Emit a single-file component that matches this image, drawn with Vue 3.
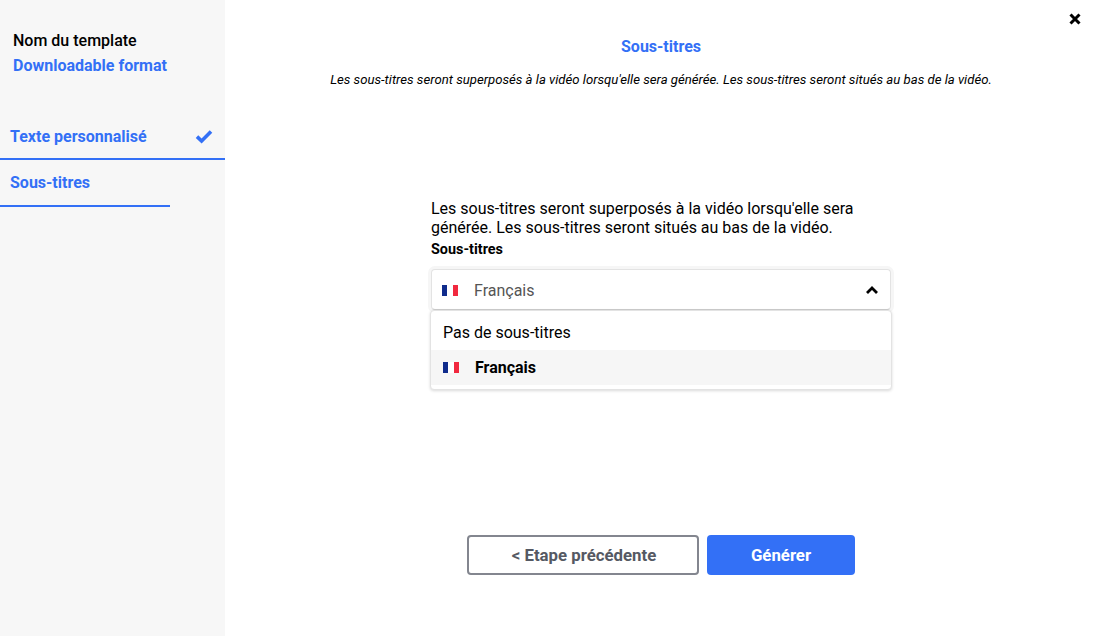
<template>
    <div class="page">
        <aside class="sidebar">
            <div class="template">
                <div class="template-name">Nom du template</div>
                <div class="template-format">Downloadable format</div>
            </div>
            <div class="step step-done">
                <span>Texte personnalisé</span>
                <svg class="check" width="18" height="14" viewBox="0 0 18 14">
                    <path d="M2 6.6l4.6 4.4L16 1.6" fill="none" stroke="#3370f6" stroke-width="3.6"/>
                </svg>
            </div>
            <div class="step step-current">
                <span>Sous-titres</span>
            </div>
        </aside>

        <main class="content">
            <button class="close" type="button" aria-label="Fermer">
                <svg width="12" height="12" viewBox="0 0 12 12">
                    <path d="M1.5 1.5l9 9M10.5 1.5l-9 9" stroke="#000" stroke-width="3"/>
                </svg>
            </button>

            <h1 class="title">Sous-titres</h1>
            <p class="subtitle">{{ description }}</p>

            <div class="form">
                <p class="intro">{{ description }}</p>
                <div class="label">Sous-titres</div>
                <div class="select">
                    <div class="select-box">
                        <span class="flag"><i></i><i></i><i></i></span>
                        <span class="select-value">{{ selected }}</span>
                        <svg class="chevron" width="14" height="10" viewBox="0 0 14 10">
                            <path d="M2 8l5-5 5 5" fill="none" stroke="#000" stroke-width="2.8"/>
                        </svg>
                    </div>
                    <ul class="menu">
                        <li v-for="option in options" :key="option.label" class="option" :class="{ active: option.label === selected }">
                            <span v-if="option.flag" class="flag"><i></i><i></i><i></i></span>
                            {{ option.label }}
                        </li>
                    </ul>
                </div>
            </div>

            <div class="actions">
                <button class="btn btn-back" type="button">&lt; Etape précédente</button>
                <button class="btn btn-primary" type="button">Générer</button>
            </div>
        </main>
    </div>
</template>

<script setup>
    const description = "Les sous-titres seront superposés à la vidéo lorsqu'elle sera générée. Les sous-titres seront situés au bas de la vidéo.";
    const selected = 'Français';
    const options = [
        { label: 'Pas de sous-titres', flag: false },
        { label: 'Français', flag: true }
    ];
</script>

<style>
    html, body{
        margin: 0;
        background: #fff;
    }
</style>

<style scoped>
    .page{
        display: flex;
        height: 636px;
        overflow: hidden;
        font-family: Roboto, "Liberation Sans", sans-serif;
        color: #000;
    }
    .sidebar{
        width: 225px;
        flex-shrink: 0;
        background: #f7f7f7;
    }
    .template{
        padding: 31px 13px 0;
        font-size: 16px;
        font-weight: 500;
        line-height: 20px;
    }
    .template-format{
        margin-top: 5px;
        color: #3370f6;
        font-weight: 700;
    }
    .step{
        display: flex;
        justify-content: space-between;
        align-items: center;
        box-sizing: border-box;
        height: 47px;
        padding: 0 12px 0 10px;
        color: #3370f6;
        font-size: 16px;
        font-weight: 700;
        border-bottom: 2px solid #3370f6;
    }
    .step-done{
        margin-top: 37px;
        padding-top: 2px;
    }
    .step-current{
        width: 170px;
    }
    .content{
        position: relative;
        flex: 1;
        display: flex;
        flex-direction: column;
        align-items: center;
        padding-left: 3px;
    }
    .close{
        position: absolute;
        top: 13px;
        right: 13px;
        width: 12px;
        height: 12px;
        padding: 0;
        border: none;
        background: none;
        display: flex;
    }
    .title{
        margin: 38px 0 0;
        color: #3370f6;
        font-size: 16px;
        font-weight: 700;
        line-height: 18px;
    }
    .subtitle{
        margin: 15px 0 0;
        font-size: 13.16px;
        font-style: italic;
        line-height: 18px;
    }
    .form{
        width: 460px;
        margin-top: 110px;
    }
    .intro{
        margin: 0;
        font-size: 16px;
        line-height: 19px;
    }
    .label{
        margin-top: 4px;
        font-size: 14.4px;
        font-weight: 700;
        line-height: 18px;
    }
    .select{
        position: relative;
        margin-top: 10px;
    }
    .select-box{
        display: flex;
        align-items: center;
        box-sizing: border-box;
        height: 41px;
        padding: 1px 11px 0 10px;
        background: #fff;
        border: 1px solid #e3e3e3;
        border-bottom-color: #ccc;
        border-radius: 4px;
        box-shadow: 0 0 0 3px #f6f6f6;
        font-size: 16px;
        color: #555;
    }
    .select-value{
        flex: 1;
        margin-left: 16px;
    }
    .flag{
        display: inline-flex;
        width: 16px;
        height: 11px;
    }
    .flag i{
        flex: 1;
        background: #fff;
    }
    .flag i:first-child{
        background: #102c8c;
    }
    .flag i:last-child{
        background: #f1293f;
    }
    .menu{
        position: absolute;
        top: 41px;
        left: -1px;
        right: -1px;
        margin: 0;
        padding: 4px 0;
        list-style: none;
        background: #fff;
        border: 1px solid #e3e3e3;
        border-radius: 4px;
        box-shadow: 0 1px 3px rgba(0, 0, 0, .15);
        font-size: 16px;
    }
    .option{
        display: flex;
        align-items: center;
        height: 35px;
        padding: 0 12px;
    }
    .option .flag{
        margin-right: 16px;
    }
    .option.active{
        background: #f6f6f6;
        font-weight: 700;
    }
    .actions{
        position: absolute;
        top: 535px;
        left: 242px;
        display: flex;
        gap: 8px;
    }
    .btn{
        box-sizing: border-box;
        height: 40px;
        border-radius: 4px;
        font-family: inherit;
        font-size: 16.8px;
        font-weight: 700;
    }
    .btn-back{
        width: 232px;
        padding-left: 8px;
        background: #fff;
        color: #555963;
        border: 2px solid #83868f;
    }
    .btn-primary{
        width: 148px;
        background: #3370f6;
        color: #fff;
        border: none;
    }
</style>
